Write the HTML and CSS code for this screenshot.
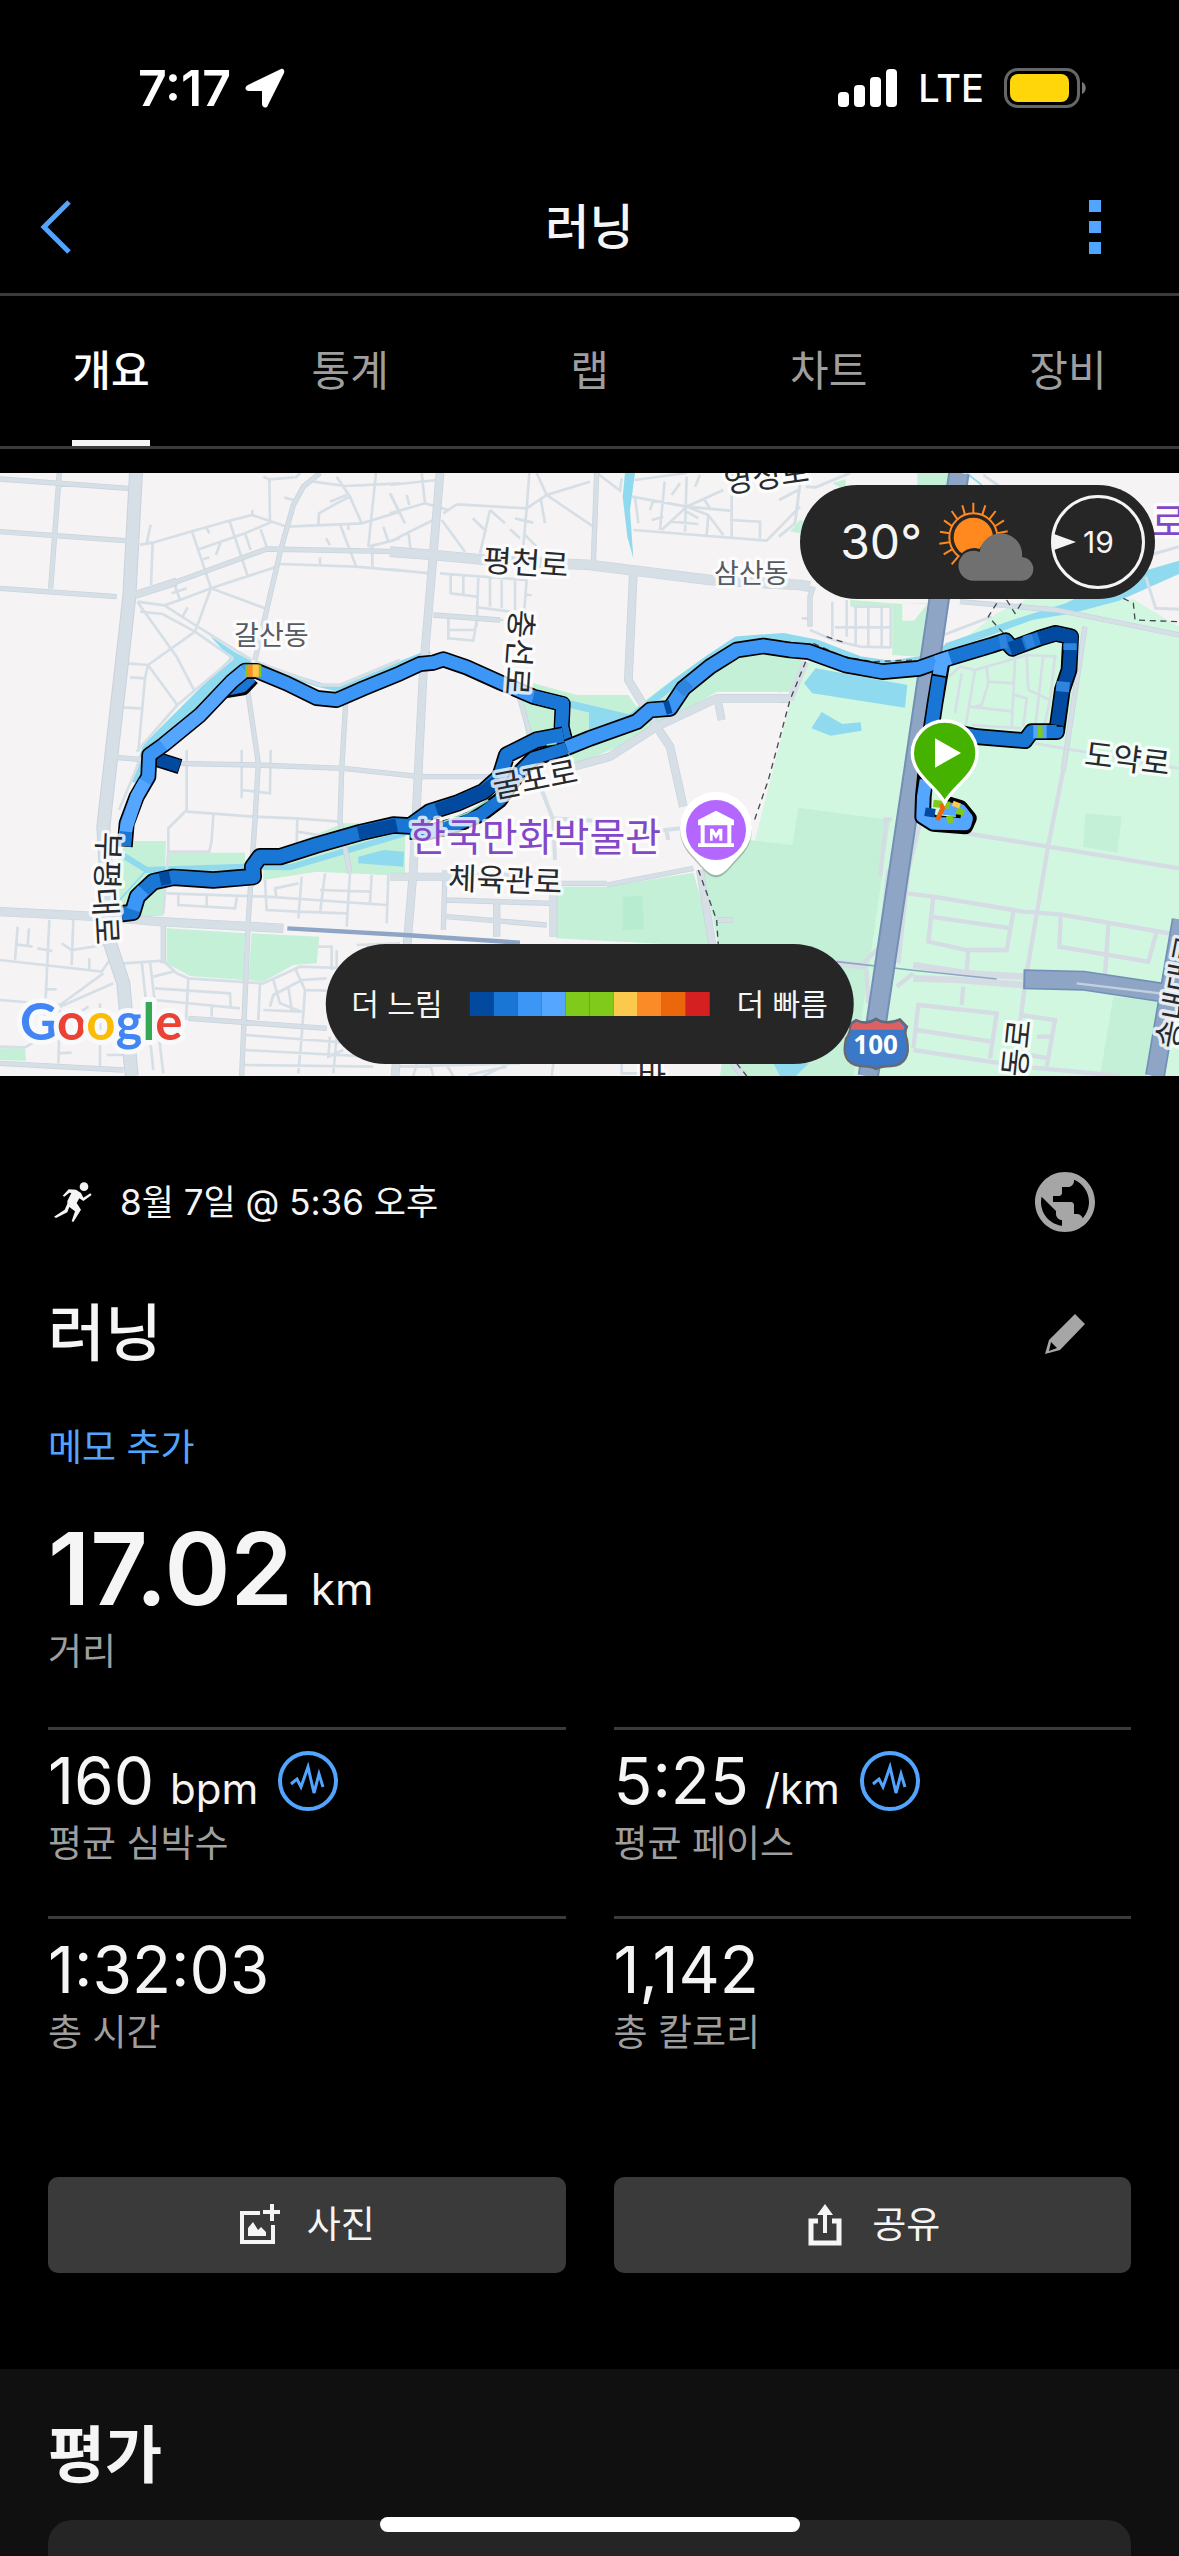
FILE: index.html
```html
<!DOCTYPE html>
<html lang="ko">
<head>
<meta charset="utf-8">
<meta name="viewport" content="width=device-width, initial-scale=1">
<title>러닝</title>
<link rel="stylesheet" href="styles.css">
</head>
<body>
<div class="page">
  <div class="status">
    <div class="status-left">
      <span class="clock">7:17</span>
      <svg class="icon-location" viewBox="0 0 40 40" aria-hidden="true"><path d="M36 1 3 17c-4 2-3 6 1 6h12c1 0 1 0 1 1v12c0 4 5 5 6 1L39 5c1-3-1-5-3-4z" fill="#fff"/></svg>
    </div>
    <div class="status-right">
      <svg class="icon-signal" viewBox="0 0 60 38" aria-hidden="true"><g fill="#fff"><rect x="0" y="23" width="11" height="15" rx="4"/><rect x="16" y="16" width="11" height="22" rx="4"/><rect x="32" y="8" width="11" height="30" rx="4"/><rect x="48" y="0" width="11" height="38" rx="4"/></g></svg>
      <span class="network">LTE</span>
      <svg class="icon-battery" viewBox="0 0 82 40" aria-hidden="true"><rect x="1.5" y="1.5" width="73" height="37" rx="12" fill="none" stroke="#666" stroke-width="3"/><rect x="6" y="6" width="59" height="28" rx="8" fill="#ffd60a"/><path d="M78 14c5 2 5 10 0 12z" fill="#777"/></svg>
    </div>
  </div>

  <header class="header">
    <button class="icon-button" type="button" aria-label="뒤로"><svg class="icon-back" viewBox="0 0 32 54" aria-hidden="true"><path d="M29 2 4 27l25 25" fill="none" stroke="#52a5ff" stroke-width="5"/></svg></button>
    <h1 class="header-title">러닝</h1>
    <button class="icon-button icon-button-end" type="button" aria-label="더보기"><svg class="icon-more" viewBox="0 0 12 54" aria-hidden="true"><path d="M0 0h12v12H0zM0 21h12v12H0zM0 42h12v12H0z" fill="#52a5ff"/></svg></button>
  </header>

  <nav class="tabs">
    <button class="tab tab-active" type="button">개요</button>
    <button class="tab" type="button">통계</button>
    <button class="tab" type="button">랩</button>
    <button class="tab" type="button">차트</button>
    <button class="tab" type="button">장비</button>
  </nav>

  <section class="map">
    <svg class="map-canvas" viewBox="0 9 3537 1809" role="img" aria-label="러닝 경로 지도">
      <rect y="9" width="3537" height="1809" fill="#f5f3f4"/>
      <!-- parks -->
      <g fill="#d1f7e1">
        <path d="M2430 570 2760 605 2850 540 2990 430 3080 388 3400 388 3537 470V1818H2180L2260 1130 2370 700Z"/>
      </g>
      <g fill="#c3f0d6">
        <path d="M2250 1110 2377 1125 2395 1013 2670 1050 2560 1818H2160L2190 1600 2110 1200Z"/>
        <path d="M1668 1250H1820L2080 1208 2145 1430 1668 1405Z"/>
        <path d="M3340 1580 3300 1818H3440L3480 1590ZM3257 1030 3365 1040 3352 1148 3249 1130Z"/>
        <path d="M500 1375 735 1390 730 1530 570 1518 500 1480ZM755 1390 958 1400 950 1480 880 1485 790 1535 745 1530Z"/>
        <path d="M380 1113H498L490 1338H420L340 1320 350 1180ZM505 1148H735V1200H505ZM790 1230 950 1205 1215 1218 1215 1060H1030L860 1130 790 1160Z"/>
        <path d="M1555 665 1600 640 1730 675H1885L1910 710 2030 620 2210 530 2400 560 2410 590 2370 665 2150 665 1930 800 1720 885 1660 830 1580 800Z"/>
        <path d="M2551 390 2707 402 2782 400 2762 560 2677 555 2677 410 2551 410ZM2752 9H2850L2845 45H2752ZM2497 40 2537 28V60ZM2370 185 2400 150 2430 160 2410 190ZM0 1735H75L78 1772 0 1770Z"/>
        <path d="M2337 570 2400 600 2337 670Z"/>
      </g>
      <path d="M1868 1280 1926 1278 1932 1376 1868 1380Z" fill="#b8ecd0"/>
      <path d="M2707 402h75l-40 50h-35z" fill="#f5f3f4"/>
      <!-- water -->
      <g fill="#8fdaee">
        <path d="M1875 9H1905L1890 120 1900 265 1882 200 1868 80ZM1767 715 1910 738 1767 790ZM630 497 710 550 755 572 735 600 700 575Z"/>
        <path d="M2837 520 3037 450 3197 400 3337 330 3537 272V312L3357 392 3217 430 3097 450 2827 550Z"/>
        <path d="M2447 595 2722 645 2715 713 2437 670 2412 640ZM2465 726 2527 762 2582 757 2585 782 2492 797 2434 775ZM1075 1160 1150 1140 1212 1145 1210 1190 1075 1180ZM2320 1780H2427L2387 1818H2340Z"/>
      </g>
      <g fill="none" stroke="#8fdaee">
        <path d="M710 570 445 835 410 940" stroke-width="36"/>
        <path d="M770 585 960 645 1010 657 1200 580 1290 545" stroke-width="14"/>
        <path d="M1700 700 1890 745 2030 635 2120 570 2210 510 2350 500 2450 520 2580 570 2670 583 2760 570 2850 530" stroke-width="22"/>
        <path d="M360 1150 440 1200 730 1190 870 1192 1215 1090" stroke-width="18"/>
        <path d="M440 1200 350 1300M2900 9 2945 45" stroke-width="5"/>
      </g>
      <!-- side streets -->
      <g fill="none" stroke="#d6dfe6" stroke-width="8">
        <path d="M420 224 458 218 576 184 688 152 757 135 860 170 1020 163 1085 160 1200 125M757 120V137M452 164 440 220M458 218 453 345M576 184 633 355 585 485 444 585 380 580M688 152 742 315M597 238 735 190 810 158 808 28 790 20M735 190 752 240M782 178 800 230M663 213 648 255M610 268 628 262M620 175 628 190M633 355 830 290M633 355 795 415M633 355 540 390 493 406 412 395M524 345 540 390M515 370 560 355M563 412 548 440M412 395 530 560 583 662M420 425 488 432 585 485 700 565M493 406 585 465 755 570M444 585 532 705M444 585 435 625 415 845M390 622 437 625M370 712 430 716M700 565 532 705 410 845M853 83 882 90M885 25 900 9M882 22 808 28M940 35 1035 48 1200 40M1010 20 1050 80 1085 160M955 165 957 130 1010 100 1050 80M990 95 1040 75M1128 9 1105 230M1170 70 1200 130M1020 163 1068 288M978 205 990 225M1045 165V180M1150 170 1165 215M1105 230 1165 215 1200 205M1117 225V290M840 282 1068 290 1200 302M960 262V285"/>
        <path d="M1170 130 1275 100 1345 120M1275 100 1265 9M1170 70 1215 160M1220 75 1228 105M1170 45 1310 30M1170 215 1300 150M1225 185 1232 240M1370 103 1580 115 1640 75 1770 35M1640 75 1610 9M1640 75 1780 170M1580 115 1588 9M1580 115 1568 250M1325 150 1395 245M1470 120 1440 250M1418 145 1460 185M1470 120 1515 160M1530 178 1560 205M1545 145 1600 158M1622 85 1635 160M1570 190 1610 230M1330 130 1370 103M1790 9 1860 62 1865 25M1904 30 2060 9M1895 80 2060 110 2190 122M1900 180 2300 212 2400 110M1994 35 1980 180M2060 20 2055 185M2040 40 2015 75M2100 15 2085 50M2195 10V200M2190 150 2280 155V205M2125 135 2120 195M2170 60 2060 110 1985 180M2060 110 2125 135 2170 195M1955 150 1990 140M2010 155 2095 162M2060 125 2095 145M2110 85 2130 115M1960 90 1950 120M1905 80 1915 160M1170 298 1290 310M1320 310 1580 330 1572 430M1352 315V370L1430 380M1390 315V375M1435 320 1430 470M1300 435 1510 450M1470 325V410M1505 330V415M1545 332V420M1435 412 1530 425M1345 445V505L1420 512 1430 450M1345 480H1425M1575 375H1595"/>
        <path d="M2337 90 2395 60M2400 40 2385 160 2337 200M2417 50 2447 52 2550 9M2950 15 3000 50M3397 270 3537 230M3437 320 3467 415 3537 418M2817 500 2975 440" stroke-width="9"/>
        <path d="M2497 395V500M2540 390V500M2567 410V525M2605 410V530M2645 410V535M2672 410V535M2505 472H2675M2560 410H2670M2430 480 2500 510 2580 530 2670 532M2405 445H2430"/>
        <path d="M2847 620 2880 590 2925 600 2895 780M2925 600 3080 555 3170 560M2960 590 2965 640 2945 705 2925 710M2965 635 3045 640M3045 570 3035 775M3080 560 3085 660 3150 690M2910 710 3040 725M3130 555 3105 780M3165 560 3150 690 3130 780M2915 765 3065 775M2885 610 2865 730M3045 675 3080 685 3070 770M3105 820 3537 895"/>
      </g>
      <g fill="none" stroke="#d6dfe6" stroke-width="8">
        <path d="M560 840V1020L505 1075V1140L490 1330M560 1025 760 1040 890 1045 1020 1055M725 840V985M725 960 810 970 812 840M892 1045 890 1120M890 1085 1020 1105M640 1035 635 1110 628 1145H505M420 870 357 1020M500 1270 800 1280 1160 1305M535 1275V1305L705 1315 712 1275M620 1275V1310M795 1230 800 1320 895 1325 1040 1330M895 1345 905 1220M830 1285 825 1255 895 1240M975 1210 960 1330M1050 1210 1040 1370M1115 1215 1110 1300M1165 1215 1160 1360M960 1260 1110 1265M0 1470 305 1505 350 1440M148 1350 132 1690M220 1350 215 1485M53 1370 45 1470M87 1375 83 1425M47 1423 98 1430M112 1435 157 1443M185 1420 215 1440 310 1425M268 1465V1500M135 1558H170M0 1590 180 1605 310 1510M180 1610 340 1540M300 1600 300 1790M180 1620 175 1780M0 1730 75 1732 130 1700 265 1610M175 1750 215 1748M320 1755H370M425 1475 460 1800M450 1475 490 1810M370 1480 490 1472 530 1510 565 1525 790 1540 900 1490 1200 1500M460 1520 520 1505M465 1555 690 1570 692 1610M465 1590 720 1615M565 1525 558 1650M635 1610V1640M780 1540 775 1650M820 1530 840 1600 905 1625M790 1620 900 1625M885 1495 915 1560 905 1700 895 1810M915 1560 980 1562M810 1610 820 1575 905 1530 980 1525M865 1550 875 1620M955 1430H995V1500M1010 1440V1490M735 1695 1130 1725M735 1740 1110 1760M735 1785 1120 1790M1010 1700 1000 1810M1070 1425 1200 1420M990 1700 985 1760 1030 1740"/>
        <path d="M1180 1790 1560 1780M1250 1780 1240 1818M1290 1780 1300 1818M1340 1785 1360 1818M1530 1780 1450 1818M1660 1780 1655 1818M1865 1780V1810H1980M1405 1815 1520 1790"/>
        <path d="M1625 960 1660 1050 1665 1170M1650 1045 1840 1055M1940 1085 2045 1075M2000 1085 2005 1110" stroke-width="12"/>
      </g>
      <g fill="none" stroke="#d5dce4" stroke-width="13">
        <path d="M2650 1048H2675M2660 1050 2640 1220M2720 1270 2800 1280 3070 1325 3180 1333 3537 1395M3190 900 3145 1125 3080 1510M2900 1090 3145 1130 3537 1195M2800 1280 2785 1415 2900 1440 3020 1440 3040 1325M2790 1340 3035 1375M2905 1440 2900 1500M3182 1340 3178 1430 3445 1475 3470 1385M3325 1365 3315 1515M3075 1545 3060 1660M2890 1550 2885 1605M2740 1735 2755 1605 2990 1630 2970 1765M2750 1680 2975 1715M2740 1740 3070 1790 3360 1818M3060 1635 3165 1650 3140 1790M3110 1700 3155 1700M3090 1755 3145 1765"/>
        <path d="M2337 1460 2600 1490M2740 1485 2900 1510 3070 1520M2740 1525 2880 1530 3070 1545" stroke-width="20"/>
        <path d="M2590 1480 2640 1430 2665 1200M2695 1480 2725 1200 2760 1060M2605 1600 2600 1500M2690 1550 2740 1510"/>
      </g>
      <!-- wider streets -->
      <g fill="none" stroke="#c8d3dc" stroke-linejoin="round">
        <path d="M178 9 152 355M0 27 385 55M0 185 375 212M0 355 350 380M960 9 910 50 880 105 842 240 765 570M530 335 800 237 1200 245M345 862 420 868 520 880 770 885 1030 895 1260 920 1500 920M740 640 775 880 765 1050 745 1350 725 1818M1037 700 1025 900 1020 1055 1050 1210M1790 9 1780 280M1300 435 1500 450M1555 670 1600 830M2430 470 2430 380 2440 350M0 1780 370 1800M490 1350V1480M565 1645 980 1675M2880 395 3170 420 3537 495M3255 470 3190 900M2337 690 2370 690M1820 1245 2080 1195M1660 1240 1820 1240M1340 1290 1650 1300M1340 1340 1640 1365M1335 1200 1330 1380M2150 1350H2200" stroke-width="16"/>
        <path d="M408 9 388 380 310 1070 330 1420 370 1540 395 1818" stroke-width="42"/>
        <path d="M405 375 530 335" stroke-width="24"/>
        <path d="M1320 9 1300 250 1270 600 1240 1200 1215 1500 1185 1818" stroke-width="26"/>
        <path d="M1170 245 1300 255 1460 270 1770 285 2130 330 2400 345 2430 350" stroke-width="32"/>
        <path d="M1900 310 1885 630 1970 770 2010 830 2050 1010" stroke-width="26"/>
        <path d="M2370 685H2150L1970 770 1830 860 1720 890" stroke-width="26"/>
        <path d="M2100 1200 2155 1530M2150 675 2165 750M1170 1220H1240L1660 1220V1400" stroke-width="24"/>
        <path d="M0 1325 300 1340 480 1355 850 1375" stroke-width="28"/>
        <path d="M2200 1780 2230 1818M1490 1300V1400" stroke-width="22"/>
      </g>
      <g fill="none" stroke="#d6dfe6" stroke-linejoin="round">
        <path d="M178 9 152 355M0 27 385 55M0 185 375 212M0 355 350 380M960 9 910 50 880 105 842 240 765 570M530 335 800 237 1200 245M345 862 420 868 520 880 770 885 1030 895 1260 920 1500 920M740 640 775 880 765 1050 745 1350 725 1818M1037 700 1025 900 1020 1055 1050 1210M1790 9 1780 280M1300 435 1500 450M1555 670 1600 830M2430 470 2430 380 2440 350M0 1780 370 1800M490 1350V1480M565 1645 980 1675M2880 395 3170 420 3537 495M3255 470 3190 900M2337 690 2370 690M1820 1245 2080 1195M1660 1240 1820 1240M1340 1290 1650 1300M1340 1340 1640 1365M1335 1200 1330 1380M2150 1350H2200" stroke-width="12"/>
        <path d="M408 9 388 380 310 1070 330 1420 370 1540 395 1818" stroke-width="36"/>
        <path d="M405 375 530 335" stroke-width="20"/>
        <path d="M1320 9 1300 250 1270 600 1240 1200 1215 1500 1185 1818" stroke-width="22"/>
        <path d="M1170 245 1300 255 1460 270 1770 285 2130 330 2400 345 2430 350" stroke-width="28"/>
        <path d="M1900 310 1885 630 1970 770 2010 830 2050 1010" stroke-width="22"/>
        <path d="M2370 685H2150L1970 770 1830 860 1720 890" stroke-width="22"/>
        <path d="M2100 1200 2155 1530M2150 675 2165 750M1170 1220H1240L1660 1220V1400" stroke-width="20"/>
        <path d="M0 1325 300 1340 480 1355 850 1375" stroke-width="24"/>
        <path d="M2200 1780 2230 1818M1490 1300V1400" stroke-width="18"/>
        <path d="M765 575 960 645 1020 645 1200 570" stroke-width="10"/>
      </g>
      <!-- highways and railway -->
      <g fill="none">
        <path d="M862 1375 1215 1395 1560 1418" stroke="#8fa5c5" stroke-width="13"/>
        <path d="M2510 1475 2760 1503 2990 1527" stroke="#8fa5c5" stroke-width="5"/>
        <path d="M3070 1528 3250 1532 3490 1568M3545 1350 3465 1818" stroke="#7290b5" stroke-width="60"/>
        <path d="M3076 1528 3250 1532 3490 1568M3545 1350 3465 1818" stroke="#8fa5c5" stroke-width="50"/>
        <path d="M3230 1540 3480 1570 3490 1600" stroke="#c3d0e0" stroke-width="7"/>
        <path d="M2877 9 2817 390 2742 900 2605 1818" stroke="#7290b5" stroke-width="64"/>
        <path d="M2877 9 2817 390 2742 900 2605 1818" stroke="#8fa5c5" stroke-width="52"/>
        <path d="M2417 575 2370 690" stroke="#d6dfe6" stroke-width="22"/>
        <path d="M2480 500 2540 520M2417 575 2370 690 2305 930 2260 1060M2095 1200 2150 1350 2155 1430M2990 400 2965 440 3020 500M3020 390 3045 430 3070 390M3370 385 3400 400 3405 450 3537 455M2440 520 2530 560 2620 575 2740 570M2210 1780 2240 1818" stroke="#444b55" stroke-width="4" stroke-dasharray="18 14"/>
      </g>
      <!-- recorded route -->
      <g fill="none" stroke-linejoin="round">
        <path d="M670 665 730 655 758 625" stroke="#000" stroke-width="42"/>
        <path d="M672 662 728 650 755 622" stroke="#1a76d4" stroke-width="34"/>
        <path d="M462 865 540 890" stroke="#000" stroke-width="46"/>
        <path d="M462 865 538 889" stroke="#014a9f" stroke-width="38"/>
        <path d="M374 1130 380 1060 410 980 445 920 448 855 490 825 600 735 695 635 735 602 770 603 860 640 950 684 1010 690 1090 655 1200 610 1260 582 1300 578 1330 568 1400 592 1500 637 1600 680 1688 702 1685 770 1700 830" stroke="#000" stroke-width="48"/>
        <path d="M374 1128 380 1060 410 980 445 920 448 855 490 825 600 735 695 635 735 602 770 603 860 640 950 684 1010 690 1090 655 1200 610 1260 582 1300 578 1330 568 1400 592 1500 637 1600 680 1688 702 1685 770 1700 830" stroke="#3b96f5" stroke-width="38"/>
        <path d="M374 1100 380 1070 410 980 435 935M490 825 600 735 695 635 735 602" stroke="#54a6ff" stroke-width="38"/>
        <path d="M373 1128 377 1085M1600 680 1688 702 1685 770 1700 830" stroke="#1a76d4" stroke-width="38"/>
        <path d="M736 602H784" stroke="#80ca1c" stroke-width="36"/>
        <path d="M744 602H778" stroke="#fa8b27" stroke-width="36"/>
        <path d="M758 602H776" stroke="#fbca4c" stroke-width="36"/>
        <path d="M1700 835 1600 865 1560 905 1500 990 1440 1035 1370 1065 1280 1088 1230 1085" stroke="#000" stroke-width="48"/>
        <path d="M1690 795 1610 810 1520 855 1500 920 1450 965 1370 1000 1290 1025 1230 1068 1180 1065 1080 1088 950 1125 840 1160 780 1160 758 1190 760 1220 640 1230 520 1222 460 1235 412 1280 398 1327 365 1331" stroke="#000" stroke-width="52"/>
        <path d="M1700 835 1600 865 1560 905 1500 990 1440 1035 1370 1065 1280 1088 1230 1085" stroke="#1a76d4" stroke-width="36"/>
        <path d="M1690 795 1610 810 1520 855 1500 920 1450 965 1370 1000 1290 1025 1230 1068 1180 1065 1080 1088 950 1125 840 1160 780 1160 758 1190 760 1220 640 1230 520 1222 460 1235 412 1280 398 1327 365 1331" stroke="#1a76d4" stroke-width="42"/>
        <path d="M1500 930 1450 965 1370 1000 1310 1020M1190 1065 1075 1089M480 1228 510 1222" stroke="#014a9f" stroke-width="40"/>
        <path d="M430 1260 412 1280 400 1320" stroke="#3b96f5" stroke-width="40"/>
        <path d="M1465 990 1400 1030 1330 1055M1640 825 1670 820" stroke="#8fdec8" stroke-width="5"/>
        <path d="M2827 570 2805 700 2790 800 2778 900 2770 980 2768 1040 2800 1060 2895 1068 2905 1045 2880 1015 2830 1000" stroke="#000" stroke-width="50"/>
        <path d="M1700 833 1770 805 1910 755 1950 720 2010 715 2050 655 2130 590 2210 540 2290 528 2370 540 2427 545 2537 585 2647 605 2757 595 2827 570 2977 525 3017 512 3037 535 3117 505 3167 490 3212 500 3207 600 3187 660 3170 785 3095 785 3075 812 2930 800 2830 780" stroke="#000" stroke-width="50"/>
        <path d="M1700 833 1770 805 1910 755 1950 720 2010 715 2050 655 2130 590 2210 540 2290 528 2370 540 2427 545 2537 585 2647 605 2757 595 2827 570" stroke="#3b96f5" stroke-width="40"/>
        <path d="M2827 570 2977 525 3017 512 3037 535 3117 505 3167 490 3212 500M3170 770V785H3095L3075 812 2930 800 2830 780M2817 620 2805 700 2790 800" stroke="#1a76d4" stroke-width="40"/>
        <path d="M3030 536 3070 522M3117 505 3167 490 3214 500 3207 600 3187 660 3172 765M1995 715 2012 710" stroke="#014a9f" stroke-width="40"/>
        <path d="M2808 577 2850 563M2824 580 2818 615M3100 785H3140" stroke="#54a6ff" stroke-width="40"/>
        <path d="M2999 517 3020 514M3210 520V540M3190 635 3187 665M3075 518 3100 510M2040 640 2065 665" stroke="#2f84dd" stroke-width="40"/>
        <path d="M3113 785H3128" stroke="#80ca1c" stroke-width="32"/>
        <path d="M2778 930 2770 980 2768 1040 2800 1060 2895 1062 2900 1045 2880 1020 2830 1015" stroke="#54a6ff" stroke-width="38"/>
        <path d="M2800 1000 2850 1006M2870 1020 2890 1032M2840 1050 2860 1046" stroke="#80ca1c" stroke-width="22"/>
        <path d="M2775 1025 2805 1030" stroke="#014a9f" stroke-width="26"/>
        <path d="M2826 1000 2828 1015 2812 1050" stroke="#ea670c" stroke-width="14"/>
        <path d="M2858 1000 2880 1008" stroke="#fbca4c" stroke-width="16"/>
        <path d="M2868 1038 2882 1040" stroke="#000" stroke-width="10"/>
      </g>
      <!-- place names -->
      <g class="map-label">
        <text x="814" y="524" class="map-area">갈산동</text>
        <text x="2254" y="340" class="map-area">삼산동</text>
        <text transform="translate(1575 312) rotate(4)">평천로</text>
        <text transform="translate(2304 52) rotate(-8)">영성로</text>
        <text transform="translate(1524 545) rotate(94)">충선로</text>
        <text transform="translate(1612 960) rotate(-11)">굴포로</text>
        <text transform="translate(1514 1264) rotate(2)">체육관로</text>
        <text transform="translate(3378 900) rotate(7)">도약로</text>
        <text transform="translate(290 1170) rotate(92)">부평</text>
        <text transform="translate(284 1340) rotate(87)">대로</text>
        <text transform="translate(3084 1738) rotate(-84)">동로</text>
        <text transform="translate(3566 1572) rotate(-79)">송내대로</text>
        <text x="1955" y="1852">바</text>
      </g>
      <g class="map-poi">
        <text x="1607" y="1142">한국만화박물관</text>
        <text x="3507" y="197">로</text>
      </g>
      <!-- museum marker -->
      <path d="M2148 1222c-14 0-24-8-34-18l-50-56a108 108 0 1 1 168 0l-50 56c-10 10-20 18-34 18z" fill="#555" opacity=".35"/>
      <path d="M2148 1215c-14 0-24-8-34-18l-45-50a108 108 0 1 1 158 0l-45 50c-10 10-20 18-34 18z" fill="#fff"/>
      <circle cx="2148" cy="1080" r="90" fill="#b367ff"/>
      <path d="m2148 1022 54 28v16h-108v-16zM2102 1066h12v54h-12zM2182 1066h12v54h-12zM2094 1120h108v11h-108zM2130 1112v-36h10l8 14 8-14h11v36h-9v-20l-10 15-10-15v20z" fill="#fff"/>
      <!-- start marker -->
      <path d="M2834 998C2810 950 2737 915 2737 850a97 97 0 0 1 194 0c0 65-73 100-97 148z" fill="#45b200" stroke="#fff" stroke-width="10"/>
      <path d="M2805 805v88l78-44z" fill="#fff"/>
      <!-- route shield -->
      <path d="M2550 1662 2568 1650Q2600 1666 2628 1646 2658 1666 2700 1648L2721 1670Q2712 1686 2721 1710C2730 1755 2715 1786 2675 1788 2655 1788 2640 1790 2628 1797 2616 1790 2600 1788 2582 1788 2535 1784 2528 1750 2538 1706Q2554 1684 2550 1662Z" fill="#3b78c8" stroke="#666a70" stroke-width="7"/>
      <path d="M2556 1664 2570 1655Q2600 1670 2628 1652 2658 1670 2698 1654L2714 1672 2711 1679H2552Z" fill="#df6063"/>
      <text x="2627" y="1753" class="map-shield">100</text>
      <text x="60" y="1711" class="map-logo"><tspan fill="#4285f4">G</tspan><tspan fill="#ea4335">o</tspan><tspan fill="#fbbc05">o</tspan><tspan fill="#4285f4">g</tspan><tspan fill="#34a853">l</tspan><tspan fill="#ea4335">e</tspan></text>
    </svg>

    <div class="weather">
      <span class="temperature">30°</span>
      <svg class="icon-weather" viewBox="483 97 285 240" aria-hidden="true">
        <circle cx="586" cy="203" r="72" fill="none" stroke="#ff881f" stroke-width="6"/>
        <path d="M586 99v32M553 107l8 28M622 107l-9 28M521 124l18 26M653 124l-20 26M498 152l25 18M678 152l-26 17M486 186l28 5M689 185l-31 6M484 222l30-4M497 254l25-15M521 284l22-26" stroke="#ff881f" stroke-width="6"/>
        <circle cx="586" cy="203" r="59" fill="#ff881f"/>
        <path d="M588 333a46 46 0 1 1 20-88 65 65 0 0 1 124 17 36 36 0 0 1-2 71z" fill="#707070" stroke="#262626" stroke-width="12"/>
        <path d="M588 333a45 45 0 1 1 17-86 63 63 0 0 1 127 16 35 35 0 0 1-2 70z" fill="#707070"/>
      </svg>
      <div class="wind"><svg class="icon-wind" viewBox="0 0 22 16" aria-hidden="true"><path d="M0 0 22 8 0 16z" fill="#f5f5f5"/></svg><span>19</span></div>
    </div>

    <div class="legend">
      <span>더 느림</span>
      <div class="legend-scale"><i class="c1"></i><i class="c2"></i><i class="c3"></i><i class="c4"></i><i class="c5"></i><i class="c5"></i><i class="c6"></i><i class="c7"></i><i class="c8"></i><i class="c9"></i></div>
      <span>더 빠름</span>
    </div>
  </section>

  <main class="summary">
    <div class="meta">
      <svg class="icon-run" viewBox="72 95 114 123" aria-hidden="true"><g fill="#f5f5f5"><circle cx="162" cy="109" r="13"/><path d="M98 136 116 117 138 118 153 128 160 142 181 129 185 134 160 152 148 144 140 158 153 178 130 215 125 213 135 183 118 170 112 186 78 203 72 199 104 178 112 160V152L124 128 118 127 103 139Z"/></g></svg>
      <span class="date">8월 7일 @ 5:36 오후</span>
      <button class="icon-button meta-action" type="button" aria-label="공개 범위"><svg class="icon-globe" viewBox="2 2 20 20" aria-hidden="true"><path fill="#a6a6a6" d="M12 2C6.480 2 2 6.480 2 12s4.480 10 10 10 10-4.480 10-10S17.520 2 12 2zm-1 17.930c-3.950-.49-7-3.850-7-7.930 0-.62.080-1.210.21-1.790L9 15v1c0 1.100.9 2 2 2v1.930zm6.900-2.540c-.26-.81-1-1.390-1.900-1.390h-1v-3c0-.55-.45-1-1-1H8v-2h2c.55 0 1-.45 1-1V7h2c1.100 0 2-.9 2-2v-.41c2.930 1.190 5 4.060 5 7.410 0 2.080-.8 3.970-2.100 5.390z"/></svg></button>
    </div>
    <div class="title-row">
      <h2 class="title">러닝</h2>
      <button class="icon-button meta-action" type="button" aria-label="이름 편집"><svg class="icon-pencil" viewBox="0 0 60 60" aria-hidden="true"><path fill="#a6a6a6" fill-rule="evenodd" d="M40 10 50 20 25 46 10 50 14 36ZM16 38 14 47 22 44Z"/></svg></button>
    </div>
    <a class="memo" href="#memo">메모 추가</a>

    <dl class="distance">
      <dd class="distance-value">17.02<span class="distance-unit">km</span></dd>
      <dt class="label">거리</dt>
    </dl>

    <dl class="stats">
      <div class="stat">
        <dd class="value">160<span class="unit">bpm</span><svg class="icon-pulse" viewBox="0 0 60 60" aria-hidden="true"><circle cx="30" cy="30" r="28" fill="none" stroke="#52a5ff" stroke-width="4"/><path d="m13 33 6-5 4 8 7-20 6 26 5-19 4 13" fill="none" stroke="#52a5ff" stroke-width="3"/></svg></dd>
        <dt class="label">평균 심박수</dt>
      </div>
      <div class="stat">
        <dd class="value">5:25<span class="unit">/km</span><svg class="icon-pulse" viewBox="0 0 60 60" aria-hidden="true"><circle cx="30" cy="30" r="28" fill="none" stroke="#52a5ff" stroke-width="4"/><path d="m13 33 6-5 4 8 7-20 6 26 5-19 4 13" fill="none" stroke="#52a5ff" stroke-width="3"/></svg></dd>
        <dt class="label">평균 페이스</dt>
      </div>
      <div class="stat">
        <dd class="value">1:32:03</dd>
        <dt class="label">총 시간</dt>
      </div>
      <div class="stat">
        <dd class="value">1,142</dd>
        <dt class="label">총 칼로리</dt>
      </div>
    </dl>

    <div class="actions">
      <button class="action" type="button"><svg class="icon-action" viewBox="0 0 42 42" aria-hidden="true"><path d="M21 9H3v29h31V21" fill="none" stroke="#f5f5f5" stroke-width="4"/><path d="M24 8h17M33 0v17" stroke="#f5f5f5" stroke-width="4"/><path d="M9 32v-8l5-6 5 8 3-3 5 5v4z" fill="#f5f5f5"/></svg>사진</button>
      <button class="action" type="button"><svg class="icon-action" viewBox="0 0 42 42" aria-hidden="true"><path d="M14 17H7v22h28V17h-7" fill="none" stroke="#f5f5f5" stroke-width="5"/><path d="M21 29V5" stroke="#f5f5f5" stroke-width="4"/><path d="m13 11 8-11 8 11z" fill="#f5f5f5"/></svg>공유</button>
    </div>
  </main>

  <section class="rating">
    <h2 class="rating-title">평가</h2>
    <div class="rating-card"></div>
  </section>
  <div class="home-indicator"></div>
</div>
</body>
</html>
```
FILE: styles.css
```css
* { box-sizing: border-box; }
body, h1, h2, dl, dd { margin: 0; }
body {
  background: #000;
  color: #f5f5f5;
  font-family: Inter, "Noto Sans CJK KR", sans-serif;
  font-size: 37px;
  line-height: 44px;
}
button {
  margin: 0;
  padding: 0;
  border: 0;
  background: none;
  color: inherit;
  font: inherit;
}
svg { display: block; flex: none; }

.page {
  position: relative;
  display: flex;
  flex-direction: column;
  min-height: 100vh;
}

.status {
  display: flex;
  align-items: center;
  justify-content: space-between;
  height: 160px;
  padding: 16px 93px 0 138px;
  color: #fff;
}
.status-left { display: flex; align-items: center; gap: 14px; }
.status-right { display: flex; align-items: center; gap: 20px; }
.clock { font-size: 50px; font-weight: 600; }
.network { font-size: 38px; font-weight: 500; }
.icon-location { width: 40px; height: 40px; }
.icon-signal { width: 60px; height: 38px; }
.icon-battery { width: 82px; height: 40px; }

.header {
  display: grid;
  grid-template-columns: 1fr auto 1fr;
  align-items: center;
  height: 136px;
  padding: 0 40px;
  border-bottom: 3px solid #3b3b3b;
}
.header-title { font-size: 48px; font-weight: 500; line-height: 60px; }
.icon-button { display: flex; align-items: center; }
.icon-button-end { justify-self: end; padding-right: 38px; }
.icon-back { width: 32px; height: 54px; }
.icon-more { width: 12px; height: 54px; }

.tabs {
  display: flex;
  justify-content: space-between;
  padding: 0 72px;
  border-bottom: 3px solid #3b3b3b;
}
.tab {
  min-width: 78px;
  height: 150px;
  padding: 6px 0 0;
  border-bottom: 6px solid transparent;
  color: #9e9e9e;
  font-size: 42px;
}
.tab-active { border-color: #f5f5f5; color: #fff; font-weight: 500; }

.map { position: relative; margin-top: 24px; }
.map-canvas { width: 100%; height: auto; }
.map-label, .map-poi {
  fill: #27292c;
  stroke: #fff;
  stroke-opacity: .8;
  stroke-width: 20px;
  stroke-linejoin: round;
  paint-order: stroke;
  text-anchor: middle;
  font-size: 93px;
}
.map-area { fill: #555b62; font-size: 81px; }
.map-poi { fill: #8347c8; font-size: 117px; }
.map-shield { fill: #fff; font-size: 78px; font-weight: 700; font-family: "Open Sans", sans-serif; text-anchor: middle; }
.map-logo {
  stroke: #f7f9fb;
  stroke-width: 30px;
  stroke-linejoin: round;
  paint-order: stroke;
  font-family: Lato, sans-serif;
  font-size: 153px;
  font-weight: 700;
}

.weather {
  position: absolute;
  top: 12px;
  right: 24px;
  display: flex;
  align-items: center;
  gap: 17px;
  height: 114px;
  padding: 0 10px 0 40px;
  border-radius: 57px;
  background: #262626;
}
.temperature { font-size: 48px; }
.icon-weather { width: 95px; height: 80px; }
.wind {
  display: flex;
  align-items: center;
  gap: 7px;
  width: 94px;
  height: 94px;
  border: 3px solid #f5f5f5;
  border-radius: 50%;
  font-size: 30px;
}
.icon-wind { width: 22px; height: 16px; }

.legend {
  position: absolute;
  bottom: 12px;
  left: 50%;
  display: flex;
  align-items: center;
  gap: 27px;
  height: 120px;
  padding: 0 26px;
  border-radius: 60px;
  background: #262626;
  font-size: 30px;
  white-space: nowrap;
  transform: translateX(-50%);
}
.legend-scale { display: flex; }
.legend-scale i { width: 24px; height: 24px; }
.c1 { background: #014a9f; }
.c2 { background: #1a76d4; }
.c3 { background: #3b96f5; }
.c4 { background: #54a6ff; }
.c5 { background: #80ca1c; }
.c6 { background: #fbca4c; }
.c7 { background: #fa8b27; }
.c8 { background: #ea670c; }
.c9 { background: #d42020; }

.summary { padding: 96px 48px; }
.meta, .title-row { display: flex; align-items: center; height: 60px; }
.meta { padding-left: 6px; gap: 28px; }
.meta-action { margin: 0 36px 0 auto; }
.date { font-size: 35px; }
.icon-run { width: 38px; height: 41px; }
.icon-globe, .icon-pencil { width: 60px; height: 60px; }
.title-row { margin-top: 72px; }
.title { font-size: 62px; font-weight: 500; line-height: 62px; }
.memo {
  display: block;
  width: fit-content;
  margin-top: 62px;
  color: #52a5ff;
  text-decoration: none;
}
.distance { margin-top: 49px; }
.distance-value {
  display: flex;
  align-items: baseline;
  gap: 18px;
  height: 100px;
  font-size: 100px;
  font-weight: 600;
  line-height: 100px;
}
.distance-unit { font-size: 44px; font-weight: 400; line-height: 44px; }
.distance .label { margin-top: 11px; }
.label { color: #9e9e9e; }

.stats {
  display: grid;
  grid-template-columns: 1fr 1fr;
  gap: 50px 48px;
  margin-top: 53px;
}
.stat {
  display: flex;
  flex-direction: column;
  gap: 8px;
  padding-top: 18px;
  border-top: 3px solid #3b3b3b;
}
.value {
  display: flex;
  align-items: baseline;
  gap: 16px;
  height: 66px;
  font-size: 64px;
  line-height: 66px;
}
.unit { font-size: 42px; }
.icon-pulse { align-self: center; width: 60px; height: 60px; margin-left: 4px; }

.actions {
  display: grid;
  grid-template-columns: 1fr 1fr;
  gap: 48px;
  margin-top: 122px;
}
.action {
  display: flex;
  align-items: center;
  justify-content: center;
  gap: 26px;
  height: 96px;
  border-radius: 10px;
  background: #3a3a3a;
}
.icon-action { width: 42px; height: 42px; }

.rating {
  display: flex;
  flex: 1;
  flex-direction: column;
  padding: 56px 48px 0;
  background: #101010;
}
.rating-title { font-size: 62px; font-weight: 700; line-height: 62px; }
.rating-card {
  flex: 1;
  min-height: 36px;
  margin-top: 33px;
  border-radius: 24px 24px 0 0;
  background: #252525;
}
.home-indicator {
  position: absolute;
  bottom: 24px;
  left: 50%;
  width: 420px;
  height: 15px;
  border-radius: 8px;
  background: #fff;
  transform: translateX(-50%);
}
```
